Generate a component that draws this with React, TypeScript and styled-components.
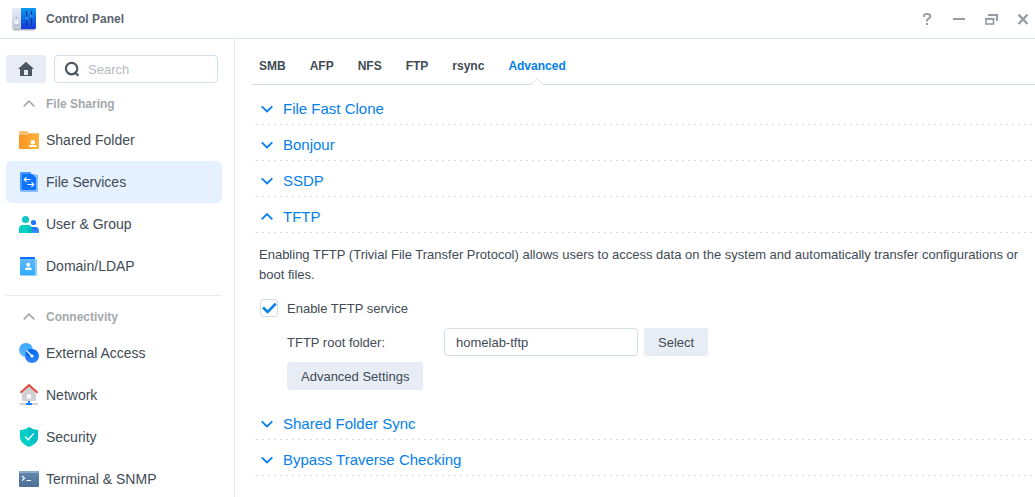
import React from "react";
import styled, { createGlobalStyle } from "styled-components";

const Global = createGlobalStyle`
  * { box-sizing: border-box; }
  html, body { margin: 0; padding: 0; overflow: hidden; background: #fff; }
  body, input, button { font-family: "Liberation Sans", Arial, sans-serif; font-size: 13px; color: #414b55; }
  svg { display: block; flex: none; }
`;

const Window = styled.div`
  width: 100vw;
  height: 100vh;
  display: flex;
  flex-direction: column;
  overflow: hidden;
`;

const TitleBar = styled.header`
  height: 39px;
  flex: none;
  display: flex;
  align-items: center;
  padding: 0 4px 0 11px;
  border-bottom: 1px solid #dfe6ee;
`;

const Title = styled.h1`
  flex: 1;
  margin: 0 0 0 9px;
  font-size: 12px;
  line-height: 18px;
  font-weight: bold;
  color: #5a646e;
`;

const WindowButtons = styled.div`
  display: flex;
  gap: 16px;
`;

const Body = styled.div`
  flex: 1;
  min-height: 0;
  display: flex;
`;

const Sidebar = styled.nav`
  width: 235px;
  flex: none;
  padding: 16px 12px 0 6px;
  border-right: 1px solid #dfe6ee;
  overflow: hidden;
`;

const SearchRow = styled.div`
  display: flex;
  gap: 8px;
`;

const HomeButton = styled.button`
  width: 40px;
  height: 28px;
  padding: 0;
  border: 0;
  border-radius: 3px;
  background: #e8edf5;
  display: flex;
  align-items: center;
  justify-content: center;
`;

const SearchBox = styled.label`
  width: 164px;
  height: 28px;
  padding-left: 9px;
  display: flex;
  align-items: center;
  gap: 8px;
  border: 1px solid #d2dee8;
  border-radius: 4px;
`;

const SearchInput = styled.input`
  width: 120px;
  padding: 0;
  border: 0;
  outline: 0;
  background: none;
  &::placeholder { color: #b4babf; opacity: 1; }
`;

const GroupHeading = styled.div`
  height: 36px;
  padding: 5px 0 0 15px;
  display: flex;
  align-items: center;
  gap: 9px;
  font-size: 12px;
  font-weight: bold;
  color: #a3a8ac;
`;

const NavItem = styled.div<{ $active?: boolean }>`
  width: 216px;
  height: 42px;
  padding-left: 11px;
  display: flex;
  align-items: center;
  gap: 5px;
  border-radius: 5px;
  font-size: 14px;
  background: ${(p) => (p.$active ? "#e5f1fe" : "transparent")};
`;

const Divider = styled.div`
  width: 216px;
  height: 1px;
  margin-top: 8px;
  background: #e6ebf2;
`;

const Main = styled.main`
  flex: 1;
  min-width: 0;
  padding: 0 0 0 16px;
`;

const TabBar = styled.div`
  height: 46px;
  padding: 16px 8px 0;
  display: flex;
  gap: 24px;
  border-bottom: 1px solid #d2dfe9;
  margin-bottom: 4px;
`;

const Tab = styled.div<{ $active?: boolean }>`
  position: relative;
  height: 30px;
  line-height: 22px;
  font-size: 12px;
  font-weight: bold;
  color: ${(p) => (p.$active ? "#057feb" : "#414b55")};
`;

const Notch = styled.svg`
  position: absolute;
  left: 50%;
  bottom: 0;
  margin-left: -7px;
`;

const SectionHeader = styled.div`
  height: 36px;
  padding: 3px 0 0 8px;
  display: flex;
  align-items: center;
  gap: 8px;
  font-size: 15px;
  line-height: 20px;
  color: #057feb;
  background: repeating-linear-gradient(90deg, #d8dcdf 0 1px, transparent 1px 5px, #d8dcdf 5px 6px) left bottom / 100% 1px no-repeat;
`;

const SectionBody = styled.div`
  height: 171px;
  padding: 12px 8px 0;
`;

const Description = styled.p`
  margin: 0 0 14px;
  line-height: 20px;
`;

const CheckRow = styled.label`
  display: flex;
  align-items: center;
  gap: 9px;
  height: 18px;
  margin: 0 0 11px 1px;
`;

const CheckBox = styled.span`
  width: 18px;
  height: 18px;
  border: 1px solid #d2dee8;
  border-radius: 3px;
`;

const FieldRow = styled.div`
  display: flex;
  align-items: center;
  height: 28px;
  margin: 0 0 6px 28px;
`;

const FieldLabel = styled.span`
  width: 157px;
`;

const TextField = styled.input`
  width: 194px;
  height: 28px;
  margin-right: 6px;
  padding: 0 11px;
  border: 1px solid #d2dee8;
  border-radius: 4px;
  outline: 0;
`;

const Button = styled.button`
  height: 28px;
  padding: 0 14px;
  border: 0;
  border-radius: 3px;
  background: #e8edf5;
`;

const Chevron = ({ up, color, width = 1.8 }: { up?: boolean; color: string; width?: number }) => (
  <svg width="16" height="16" viewBox="0 0 16 16" fill="none" stroke={color} strokeWidth={width}>
    <path d={up ? "M2.7 10.3 8 5.100l5.3 5.200" : "M2.7 5.3 8 10.500l5.3-5.200"} />
  </svg>
);

const ControlPanelIcon = () => (
  <svg width="26" height="24" viewBox="0 0 26 24">
    <defs>
      <linearGradient id="cpL" x2="0" y2="1"><stop stopColor="#e8ebfb" /><stop offset="1" stopColor="#c3c9d8" /></linearGradient>
      <linearGradient id="cpR" x2="0" y2="1"><stop stopColor="#0c9cf0" /><stop offset="1" stopColor="#1537d8" /></linearGradient>
    </defs>
    <rect x="2" y="21" width="22" height="2.4" rx="1" fill="#b3b6c2" />
    <path d="M2 1h8v21H2.500a1.500 1.500 0 0 1-1.500-1.500V2a1 1 0 0 1 1-1z" fill="url(#cpL)" />
    <path d="M10 1h14a1 1 0 0 1 1 1v18.500a1.500 1.500 0 0 1-1.500 1.500H10z" fill="url(#cpR)" />
    <circle cx="5.500" cy="15.800" r="2.800" fill="#adb4c4" />
    <circle cx="5.500" cy="15.200" r="2.400" fill="#f1f3fa" />
    <circle cx="5.500" cy="10.500" r=".6" fill="#687084" />
    <path d="M15.500 4v14.500M20.500 4v14.500" stroke="#08328c" />
    <circle cx="15.500" cy="11.300" r="1.500" fill="#2393f6" />
    <circle cx="20.500" cy="9.300" r="1.500" fill="#2393f6" />
  </svg>
);

const HelpIcon = () => (
  <svg width="16" height="16" viewBox="0 0 16 16" fill="none" stroke="#969ca1" strokeWidth="2">
    <path d="M4.900 6V5.300C4.900 3.700 6 3 8 3s3.300.9 3.300 2.400C11.300 7.500 8 7.600 8 9.600v.9" />
    <path d="M8 12v2" />
  </svg>
);
const MinimizeIcon = () => (
  <svg width="16" height="16" viewBox="0 0 16 16"><path d="M2 7h12v2H2z" fill="#969ca1" /></svg>
);
const RestoreIcon = () => (
  <svg width="16" height="16" viewBox="0 0 16 16" fill="none" stroke="#969ca1" strokeWidth="2">
    <path d="M5 4h9v6" strokeWidth="2" />
    <rect x="3" y="7.700" width="7.500" height="5.300" strokeWidth="1.600" />
    <path d="M2.200 7.900h9.100" />
  </svg>
);
const CloseIcon = () => (
  <svg width="16" height="16" viewBox="0 0 16 16" fill="none" stroke="#969ca1" strokeWidth="2.300">
    <path d="M3.500 3.600l9 9.400M12.500 3.600l-9 9.400" />
  </svg>
);

const HomeIcon = () => (
  <svg width="16" height="16" viewBox="0 0 16 16">
    <path d="M8 .8 16 8H0z" fill="#4b5763" />
    <path d="M2 7.500h12V15H2zM6 9v5h4V9z" fill="#4b5763" fillRule="evenodd" />
  </svg>
);
const SearchIcon = () => (
  <svg width="16" height="16" viewBox="0 0 16 16" fill="none" stroke="#4b5763" strokeWidth="2.200">
    <circle cx="7.600" cy="7.600" r="5.700" />
    <path d="M10.700 11l3.700 3.700" />
  </svg>
);

const SharedFolderIcon = () => (
  <svg width="24" height="24" viewBox="0 0 24 24">
    <defs><linearGradient id="sf"><stop stopColor="#fb9422" /><stop offset="1" stopColor="#fdb53d" /></linearGradient></defs>
    <path d="M2 4a1 1 0 0 1 1-1h7l1.500 2H21a1 1 0 0 1 1 1v4H2z" fill="#fbc078" />
    <path d="M2 7h7.500L11 6h11v14a1 1 0 0 1-1 1H3a1 1 0 0 1-1-1z" fill="url(#sf)" />
    <circle cx="15.800" cy="14.200" r="2.200" fill="#fff" />
    <path d="M12 19v-.6q0-1.400 1.500-1.400h4.600q1.400 0 1.400 1.400v.6z" fill="#fff" />
  </svg>
);
const FileServicesIcon = () => (
  <svg width="24" height="24" viewBox="0 0 24 24">
    <path d="M3 3a1 1 0 0 1 1-1h10v18H4a1 1 0 0 1-1-1z" fill="#489bff" />
    <path d="M5 4h12l4 1v16a1 1 0 0 1-1 1H4a1 1 0 0 1-1-1v-1h2z" fill="#86b9ff" />
    <path d="M5 5a1 1 0 0 1 1-1h9l4 4v11a1 1 0 0 1-1 1H5z" fill="#0b73ff" />
    <path d="M14 3.500 19.500 8.500h-3z" fill="#0b73ff" />
    <g fill="none" stroke="#fff" strokeWidth="1.100">
      <path d="M13.500 9.500H7.300M9.500 7.200 7.200 9.500l2.300 2.300M10.500 14.500h6.200M14.500 12.200l2.300 2.300-2.300 2.300" />
    </g>
  </svg>
);
const UserGroupIcon = () => (
  <svg width="24" height="24" viewBox="0 0 24 24">
    <defs><linearGradient id="ug" x2="0" y2="1"><stop stopColor="#1769f8" /><stop offset="1" stopColor="#3f96ff" /></linearGradient></defs>
    <circle cx="16.500" cy="10.500" r="2.600" fill="#1f78fb" />
    <path d="M11 21v-2.500a4 4 0 0 1 4-3.500h3a4 4 0 0 1 4 4v2z" fill="url(#ug)" />
    <circle cx="8.500" cy="7.500" r="3.600" fill="#10c8c6" />
    <path d="M2 21v-4q0-4 4-4h5q4 0 4 4v4z" fill="#00cfc5" />
    <path d="M11 21v-2.500q0-3 3.700-3.400.3.800.3 1.900v4z" fill="#00b9b9" />
  </svg>
);
const DomainIcon = () => (
  <svg width="24" height="24" viewBox="0 0 24 24">
    <defs><linearGradient id="dm" x2="0" y2="1"><stop stopColor="#62b9ff" /><stop offset="1" stopColor="#2fadff" /></linearGradient></defs>
    <path d="M4 3h13a1 1 0 0 1 1 1v2H3V4a1 1 0 0 1 1-1z" fill="#0b70ff" />
    <path d="M17 5h2a1 1 0 0 1 1 1v15a1 1 0 0 1-1 1H4a1 1 0 0 1-1-1z" fill="#91cfff" />
    <path d="M3 5h14a1 1 0 0 1 1 1v14a1 1 0 0 1-1 1H3z" fill="url(#dm)" />
    <circle cx="11.300" cy="10.700" r="1.900" fill="#fff" />
    <path d="M8 16v-.9q0-1.700 1.700-1.700H13q1.700 0 1.700 1.700v.9z" fill="#fff" />
  </svg>
);
const ExternalIcon = () => (
  <svg width="24" height="24" viewBox="0 0 24 24">
    <defs>
      <linearGradient id="ex" x2="0" y2="1"><stop stopColor="#38a5ff" /><stop offset="1" stopColor="#5fbdff" /></linearGradient>
      <linearGradient id="ey" x2="0" y2="1"><stop stopColor="#0769fa" /><stop offset="1" stopColor="#3187ff" /></linearGradient>
    </defs>
    <circle cx="9" cy="9" r="7" fill="url(#ex)" />
    <circle cx="15" cy="15" r="7" fill="url(#ey)" />
    <path d="M8.300 11Q9.500 8.500 12.500 8.100 15 8.500 15.800 10.500 15.500 14.500 12.500 15.300 9.500 15 8.300 11z" fill="#0869e8" />
    <path d="M9.500 9.500 15 15" stroke="#fff" strokeWidth="1.300" />
    <circle cx="15" cy="15" r="1.600" fill="#fff" />
  </svg>
);
const NetworkIcon = () => (
  <svg width="24" height="24" viewBox="0 0 24 24">
    <path d="M12 3.500 19 10v7a1 1 0 0 1-1 1H6a1 1 0 0 1-1-1v-7z" fill="#cfd1d5" />
    <path d="M3.500 9.800 12 2.200l8.500 7.600" fill="none" stroke="#db4840" strokeWidth="2" />
    <rect x="10" y="11.500" width="4" height="4" fill="#fff" />
    <path d="M3 20h18v2H3z" fill="#cfd1d5" />
    <path d="M11 18h2v2h2v2H9v-2h2z" fill="#147bff" />
  </svg>
);
const SecurityIcon = () => (
  <svg width="24" height="24" viewBox="0 0 24 24">
    <path d="M12 2c2.500 2 5.500 2.700 9 3v7c0 5-5 8.500-9 10-4-1.500-9-5-9-10V5c3.500-.3 6.500-1 9-3z" fill="#02cfc8" />
    <path d="M12 2c2.500 2 5.500 2.700 9 3v7c0 3-2 5.500-4 7L12 13z" fill="#00bfc9" />
    <path d="M8 11.500l3.300 3.300L16.700 8.400" fill="none" stroke="#fff" strokeWidth="1.400" />
  </svg>
);
const TerminalIcon = () => (
  <svg width="24" height="24" viewBox="0 0 24 24">
    <defs><linearGradient id="tm" x2="0" y2="1"><stop stopColor="#6388b2" /><stop offset="1" stopColor="#4d6f93" /></linearGradient></defs>
    <rect x="2" y="4" width="20" height="16" rx="1" fill="url(#tm)" />
    <path d="M2 6V5a1 1 0 0 1 1-1h18a1 1 0 0 1 1 1v1z" fill="#8dabc9" />
    <path d="M5 9l2.500 2.300L5 13.600M9.500 13.500H14" fill="none" stroke="#fff" strokeWidth="1.200" />
  </svg>
);

const groups = [
  {
    name: "File Sharing",
    items: [
      { label: "Shared Folder", Icon: SharedFolderIcon },
      { label: "File Services", Icon: FileServicesIcon, active: true },
      { label: "User & Group", Icon: UserGroupIcon },
      { label: "Domain/LDAP", Icon: DomainIcon },
    ],
  },
  {
    name: "Connectivity",
    items: [
      { label: "External Access", Icon: ExternalIcon },
      { label: "Network", Icon: NetworkIcon },
      { label: "Security", Icon: SecurityIcon },
      { label: "Terminal & SNMP", Icon: TerminalIcon },
    ],
  },
];

const tabs = ["SMB", "AFP", "NFS", "FTP", "rsync", "Advanced"];

const Section = ({ title, open, children }: { title: string; open?: boolean; children?: React.ReactNode }) => (
  <section>
    <SectionHeader>
      <Chevron up={open} color="#057feb" />
      {title}
    </SectionHeader>
    {open && <SectionBody>{children}</SectionBody>}
  </section>
);

export default function App() {
  return (
    <Window>
      <Global />
      <TitleBar>
        <ControlPanelIcon />
        <Title>Control Panel</Title>
        <WindowButtons>
          <HelpIcon />
          <MinimizeIcon />
          <RestoreIcon />
          <CloseIcon />
        </WindowButtons>
      </TitleBar>
      <Body>
        <Sidebar>
          <SearchRow>
            <HomeButton><HomeIcon /></HomeButton>
            <SearchBox>
              <SearchIcon />
              <SearchInput placeholder="Search" />
            </SearchBox>
          </SearchRow>
          {groups.map((g, i) => (
            <React.Fragment key={g.name}>
              {i > 0 && <Divider />}
              <GroupHeading>
                <Chevron up color="#a3a8ac" width={1.7} />
                {g.name}
              </GroupHeading>
              {g.items.map(({ label, Icon, active }: { label: string; Icon: React.FC; active?: boolean }) => (
                <NavItem key={label} $active={active}>
                  <Icon />
                  {label}
                </NavItem>
              ))}
            </React.Fragment>
          ))}
        </Sidebar>
        <Main>
          <TabBar>
            {tabs.map((t) => (
              <Tab key={t} $active={t === "Advanced"}>
                {t}
                {t === "Advanced" && (
                  <Notch width="14" height="8" viewBox="0 0 14 8">
                    <path d="M1 7 7 1l6 6v1H1z" fill="#fff" />
                    <path d="M0 7.500h1L7 1.500l6 6h1" fill="none" stroke="#d2dfe9" />
                  </Notch>
                )}
              </Tab>
            ))}
          </TabBar>
          <Section title="File Fast Clone" />
          <Section title="Bonjour" />
          <Section title="SSDP" />
          <Section title="TFTP" open>
            <Description>
              Enabling TFTP (Trivial File Transfer Protocol) allows users to access data on the system and automatically transfer configurations or boot files.
            </Description>
            <CheckRow>
              <CheckBox>
                <svg width="16" height="16" viewBox="0 0 16 16" fill="none" stroke="#057feb" strokeWidth="2.600">
                  <path d="M2 7.500l4.600 4.400L14.800 3.600" />
                </svg>
              </CheckBox>
              Enable TFTP service
            </CheckRow>
            <FieldRow>
              <FieldLabel>TFTP root folder:</FieldLabel>
              <TextField defaultValue="homelab-tftp" />
              <Button>Select</Button>
            </FieldRow>
            <FieldRow>
              <Button>Advanced Settings</Button>
            </FieldRow>
          </Section>
          <Section title="Shared Folder Sync" />
          <Section title="Bypass Traverse Checking" />
        </Main>
      </Body>
    </Window>
  );
}
